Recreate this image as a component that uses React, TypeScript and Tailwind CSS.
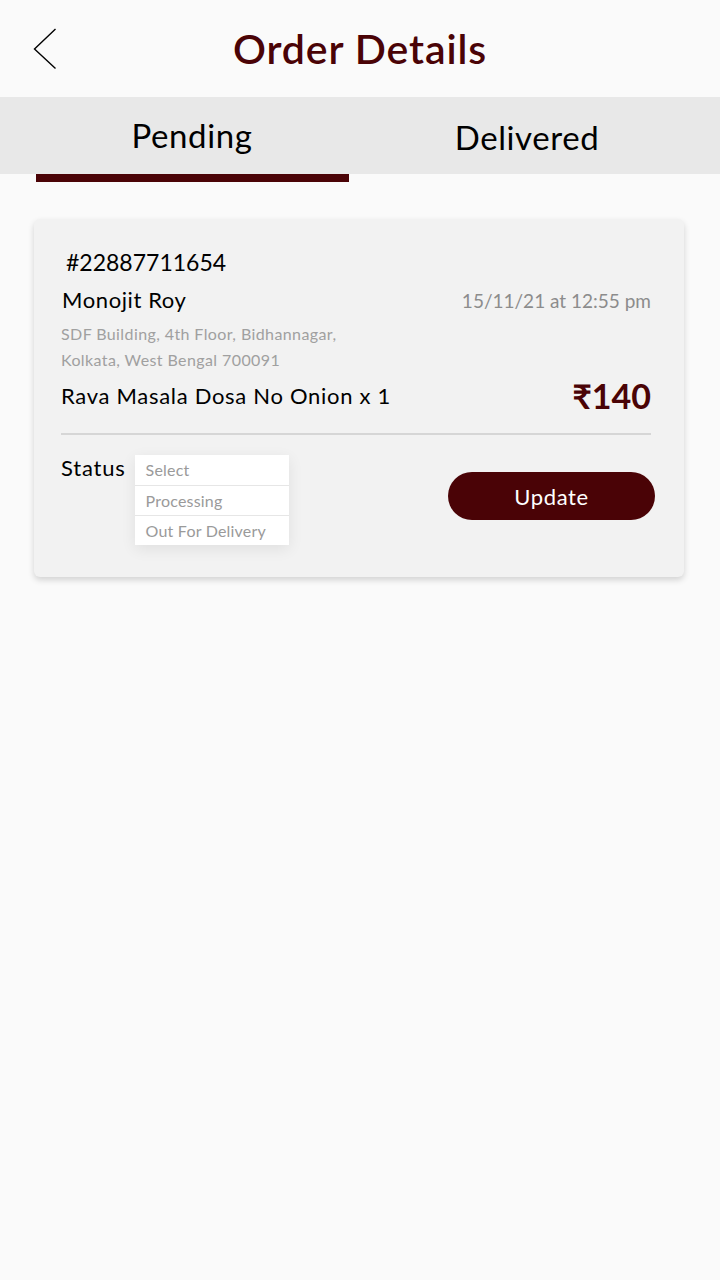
const statuses = ["Select", "Processing", "Out For Delivery"];

export default function App() {
  return (
    <div className="min-h-[1280px] w-[720px] bg-[#fafafa] font-['Lato',sans-serif] text-black">
      <header className="relative flex h-[97px] items-center justify-center">
        <button className="absolute left-[33px] top-[28px]">
          <svg width="24" height="42" viewBox="0 0 24 42" fill="none">
            <polyline points="22.5,1 1.5,21 22.5,40.5" stroke="#000" strokeWidth="1.4" />
          </svg>
        </button>
        <h1 className="text-[41px] font-semibold tracking-[0.9px] text-[#4a0306]">Order Details</h1>
      </header>

      <nav className="flex h-[77px] bg-[#e8e8e8] text-[33px] tracking-[0.6px]">
        <div className="flex w-[360px] justify-center pl-[24px] pt-[14px]">Pending</div>
        <div className="flex w-[360px] justify-center pr-[26px] pt-[16px]">Delivered</div>
      </nav>
      <div className="ml-[36px] h-[8px] w-[313px] bg-[#4a0306]" />

      <section className="ml-[34px] mt-[37px] h-[358px] w-[650px] rounded-md bg-[#f2f2f2] pl-[27px] pr-[33px] pt-[26px] shadow-[0_3px_6px_rgba(0,0,0,0.16)]">
        <div className="pl-[5px] text-[23px] leading-[34px]">#22887711654</div>
        <div className="mt-[4px] flex items-center justify-between">
          <span className="pl-[1px] text-[22px] tracking-[0.6px]">Monojit Roy</span>
          <span className="mt-[3px] text-[19px] text-[#8c8c8c]">15/11/21 at 12:55 pm</span>
        </div>
        <div className="mt-[5px] text-[16px] leading-[26px] tracking-[0.4px] text-[#a0a0a0]">
          <p>SDF Building, 4th Floor, Bidhannagar,</p>
          <p>Kolkata, West Bengal 700091</p>
        </div>
        <div className="mt-[3px] flex h-[40px] items-center justify-between">
          <span className="text-[22px] leading-none tracking-[0.7px]">Rava Masala Dosa No Onion x 1</span>
          <span className="text-[34px] font-bold leading-none text-[#4a0306]">₹140</span>
        </div>
        <div className="mt-[17px] h-[2px] bg-[#d6d6d6]" />

        <div className="mt-[20px] flex items-start justify-between">
          <div className="flex items-start">
            <span className="mt-[-4px] text-[22px] tracking-[0.8px]">Status</span>
            <ul className="ml-[9px] w-[154px] bg-white text-[16px] tracking-[0.2px] text-[#9a9a9a] shadow-[0_4px_14px_rgba(0,0,0,0.08)]">
              {statuses.map((s, i) => (
                <li
                  key={s}
                  className={
                    i === 0
                      ? "h-[30px] px-[11px] leading-[30px]"
                      : "h-[30px] border-t border-[#e6e6e6] px-[11px] leading-[29px]"
                  }
                >
                  {s}
                </li>
              ))}
            </ul>
          </div>
          <button className="mr-[-4px] mt-[17px] h-[48px] w-[207px] rounded-full bg-[#4a0306] text-[22px] tracking-[0.6px] text-white">
            Update
          </button>
        </div>
      </section>
    </div>
  );
}
